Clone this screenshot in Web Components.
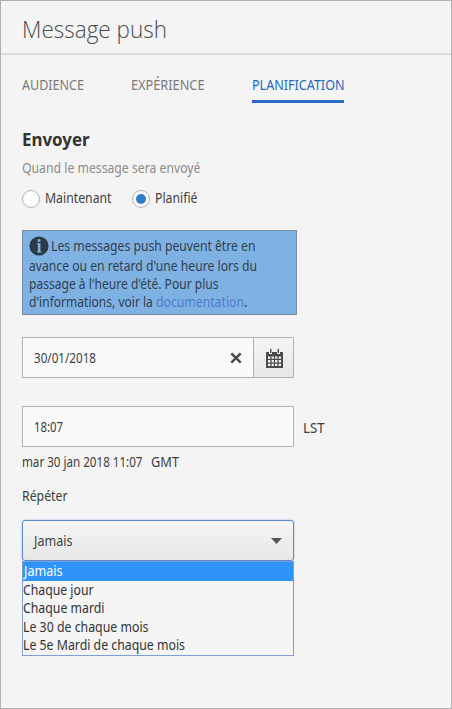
<!DOCTYPE html>
<html lang="fr">
<head>
<meta charset="utf-8">
<title>Message push</title>
<style>
html,body{margin:0;height:100%}
body{font:14px/20px "Noto Sans","Open Sans",sans-serif;color:#404040;overflow:hidden}
</style>
</head>
<body>
<push-panel></push-panel>
<script>
function define(name, markup, setup) {
  const tpl = document.createElement('template');
  tpl.innerHTML = markup;
  customElements.define(name, class extends HTMLElement {
    connectedCallback() {
      if (this.shadowRoot) return;
      this.attachShadow({mode: 'open'}).append(tpl.content.cloneNode(true));
      if (setup) setup(this, this.shadowRoot);
    }
  });
}

/* A line of text condensed to the width given in its "w" attribute. */
define('fit-text', `
<style>
:host{display:block;height:20px;line-height:20px;flex:none}
span{display:inline-block;white-space:pre;transform-origin:0 0;line-height:inherit}
</style><span><slot></slot></span>`, (host, root) => {
  const w = +host.getAttribute('w');
  const span = root.querySelector('span');
  host.style.width = w + 'px';
  span.style.transform = 'scaleX(' + w / span.getBoundingClientRect().width + ')';
});

define('panel-header', `
<style>
:host{display:block;box-sizing:border-box;height:54px;border-bottom:2px solid #dcdcdc;padding:11px 0 0 21px;font:300 24.5px "Open Sans","Noto Sans",sans-serif;color:#4b4b4b}
fit-text{height:34px;line-height:34px}
</style><fit-text w="145"><slot></slot></fit-text>`);

define('tab-item', `
<style>
:host{display:block;height:28px;box-sizing:border-box;color:#7a7a7a}
:host([active]){color:#2466c0;border-bottom:3px solid #2869c3}
</style><slot></slot>`);

define('tab-bar', `
<style>
:host{display:grid;grid-template-columns:109px 121px 92px;padding:20px 0 0 21px}
</style><slot></slot>`);

define('radio-option', `
<style>
:host{display:flex;gap:5px}
i{box-sizing:border-box;width:18px;height:18px;margin-top:2px;border:1px solid #b5b5b5;border-radius:50%;background:#fcfcfc;display:grid;place-items:center}
:host([checked]) i::after{content:"";width:10px;height:10px;border-radius:50%;background:#2a7fc9}
</style><i></i><slot></slot>`);

define('info-note', `
<style>
:host{display:block;box-sizing:border-box;width:275px;height:85px;border:1px solid #778ea8;background:#80b1e3;padding:5px 0 0 6px;color:#303f4e}
.first{display:flex;gap:2px;height:19px}
svg{width:20px;height:20px;flex:none}
</style>
<div class="first"><svg viewBox="0 0 20 20"><circle cx="10" cy="10" r="9.6" fill="#2d3b49"/><path d="M8.7 3.2h2.7v2.5H8.7zM8 7.3h3.4v7.9h.9v1.3H8v-1.3h.9V8.6H8z" fill="#80b1e3"/></svg><slot name="lead"></slot></div>
<slot></slot>`);

define('text-field', `
<style>
:host{display:flex;box-sizing:border-box;width:272px;height:41px;border:1px solid #b1b1b1;background:#fafafa;padding:10px 0 0 11px}
</style><slot></slot>`);

define('date-field', `
<style>
:host{display:flex;box-sizing:border-box;width:272px;height:41px;border:1px solid #b1b1b1;background:#fafafa}
.v{flex:1;padding:10px 0 0 11px}
.x{width:12px;height:12px;margin:14px 11px 0 0}
.b{width:40px;box-sizing:border-box;border-left:1px solid #b1b1b1;background:linear-gradient(#f5f5f5,#e7e7e7);padding:11px 0 0 12px}
svg{display:block}
</style>
<div class="v"><slot></slot></div>
<svg class="x" viewBox="0 0 12 12"><path d="M1.3 1.3l9.4 9.4M10.7 1.3L1.3 10.7" stroke="#4b4b4b" stroke-width="2.5"/></svg>
<div class="b"><svg width="17" height="19" viewBox="0 0 17 19"><path fill="#4b4b4b" d="M0 3h3v2h3V3h5v2h3V3h3v16H0z"/><path fill="#4b4b4b" d="M4 0h1.4v4H4zM11.6 0H13v4h-1.4z"/><path fill="#f1f1f1" d="M2 7.6h2.3v2.2H2zm3.6 0h2.3v2.2H5.6zm3.5 0h2.3v2.2H9.1zm3.6 0H15v2.2h-2.3zM2 11h2.3v2.5H2zm3.6 0h2.3v2.5H5.6zm3.5 0h2.3v2.5H9.1zm3.6 0H15v2.5h-2.3zM2 14.7h2.3V17H2zm3.6 0h2.3V17H5.6zm3.5 0h2.3V17H9.1zm3.6 0H15V17h-2.3z"/></svg></div>`);

define('select-box', `
<style>
:host{display:block;width:272px}
.c{display:flex;justify-content:space-between;box-sizing:border-box;height:41px;border:1px solid #5c8acb;border-radius:3px;background:linear-gradient(#f5f5f5,#e7e7e7);box-shadow:0 0 2px #91b1df;padding:10px 11px 0 11px}
svg{width:11px;height:6px;margin-top:7px}
.l{box-sizing:border-box;height:95px;border:1px solid #7d9fd2;background:#f5f5f5;color:#333}
</style>
<div class="c"><slot name="value"></slot><svg viewBox="0 0 11 6"><path d="M0 0h11L5.5 6z" fill="#555"/></svg></div>
<div class="l"><slot></slot></div>`);

define('select-option', `
<style>
:host{display:block;height:18.6px}
:host([selected]){background:#2e94fb;color:#fff}
:host([selected]) ::slotted(fit-text){margin-left:1px}
</style><slot></slot>`);

define('push-panel', `
<style>
:host{display:block;box-sizing:border-box;width:452px;height:709px;border:1px solid #b0b0b0;background:#f4f4f4}
main{padding-left:21px}
.title{font-weight:700;font-size:18px;color:#333;height:26px;line-height:26px;margin-top:23px}
.sub{color:#8c8c8c;margin-top:6px}
.radios{display:flex;gap:20px;margin-top:10px}
info-note{margin-top:22px}
date-field{margin-top:22px}
.time{display:flex;gap:9px;margin-top:28px}
.time>fit-text{margin-top:12px}
.gmt{display:flex;gap:8px;margin-top:5px}
.rep{margin-top:14px}
select-box{margin-top:14px}
.last{display:flex}
.doc{color:#4a7dcc}
info-note>fit-text:not([slot]){height:18px;line-height:18px}
.n1{margin-top:2px}
.last fit-text{height:17px;line-height:17px}
select-option fit-text{height:18.6px;line-height:18.6px}
</style>
<panel-header>Message push</panel-header>
<tab-bar>
<tab-item><fit-text w="62">AUDIENCE</fit-text></tab-item>
<tab-item><fit-text w="73.5">EXPÉRIENCE</fit-text></tab-item>
<tab-item active><fit-text w="92.5">PLANIFICATION</fit-text></tab-item>
</tab-bar>
<main>
<fit-text class="title" w="67.5">Envoyer</fit-text>
<fit-text class="sub" w="178.5">Quand le message sera envoyé</fit-text>
<div class="radios">
<radio-option><fit-text w="66.5">Maintenant</fit-text></radio-option>
<radio-option checked><fit-text w="42.5">Planifié</fit-text></radio-option>
</div>
<info-note>
<fit-text slot="lead" w="204.5">Les messages push peuvent être en</fit-text>
<fit-text class="n1" w="228">avance ou en retard d'une heure lors du</fit-text>
<fit-text w="189.5">passage à l'heure d'été. Pour plus</fit-text>
<div class="last"><fit-text w="127">d'informations, voir la </fit-text><fit-text class="doc" w="88">documentation</fit-text><fit-text w="3.5">.</fit-text></div>
</info-note>
<date-field><fit-text w="62">30/01/2018</fit-text></date-field>
<div class="time"><text-field><fit-text w="29">18:07</fit-text></text-field><fit-text w="21.5">LST</fit-text></div>
<div class="gmt"><fit-text w="120.5">mar 30 jan 2018 11:07</fit-text><fit-text w="28">GMT</fit-text></div>
<fit-text class="rep" w="45.5">Répéter</fit-text>
<select-box>
<fit-text slot="value" w="38.5">Jamais</fit-text>
<select-option selected><fit-text w="38.5">Jamais</fit-text></select-option>
<select-option><fit-text w="70.5">Chaque jour</fit-text></select-option>
<select-option><fit-text w="81.5">Chaque mardi</fit-text></select-option>
<select-option><fit-text w="125.5">Le 30 de chaque mois</fit-text></select-option>
<select-option><fit-text w="162">Le 5e Mardi de chaque mois</fit-text></select-option>
</select-box>
</main>`);
</script>
</body>
</html>
